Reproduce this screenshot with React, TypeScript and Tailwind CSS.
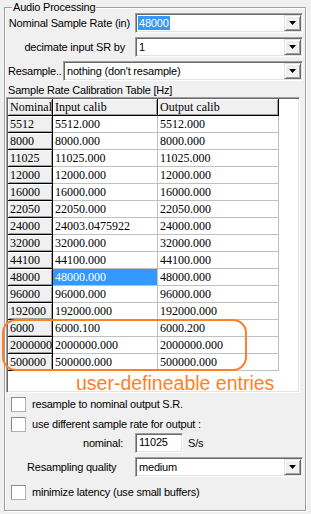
import React from 'react'

const rows: [string, string, string][] = [
  ['5512', '5512.000', '5512.000'],
  ['8000', '8000.000', '8000.000'],
  ['11025', '11025.000', '11025.000'],
  ['12000', '12000.000', '12000.000'],
  ['16000', '16000.000', '16000.000'],
  ['22050', '22050.000', '22050.000'],
  ['24000', '24003.0475922', '24000.000'],
  ['32000', '32000.000', '32000.000'],
  ['44100', '44100.000', '44100.000'],
  ['48000', '48000.000', '48000.000'],
  ['96000', '96000.000', '96000.000'],
  ['192000', '192000.000', '192000.000'],
  ['6000', '6000.100', '6000.200'],
  ['2000000', '2000000.000', '2000000.000'],
  ['500000', '500000.000', '500000.000'],
]

const ui = 'text-[11px] tracking-[-0.2px] whitespace-nowrap'

function Combo({ value, width, selected }: { value: string; width: string; selected?: boolean }) {
  return (
    <div
      className={`${width} h-[20px] flex items-center bg-white border border-t-[#a0a0a0] border-l-[#a0a0a0] border-b-white border-r-white shadow-[inset_1px_1px_0_#696969,inset_-1px_-1px_0_#e3e3e3]`}
    >
      <div className={`flex-1 pl-[2px] leading-none ${ui}`}>
        <span className={selected ? 'bg-[#3399ff] text-white px-[1px] py-[1px]' : 'px-[1px]'}>{value}</span>
      </div>
      <div className="w-[17px] h-[16px] mr-[1px] bg-[#f0f0f0] flex items-center justify-center border border-t-[#e3e3e3] border-l-[#e3e3e3] border-b-[#696969] border-r-[#696969] shadow-[inset_1px_1px_0_white,inset_-1px_-1px_0_#a0a0a0]">
        <svg width="7" height="4" viewBox="0 0 7 4">
          <path d="M0 0h7L3.5 4z" fill="#000" />
        </svg>
      </div>
    </div>
  )
}

function Check({ label }: { label: string }) {
  return (
    <div className="flex items-center h-[15px]">
      <div className="w-[15px] h-[15px] ml-[5px] bg-white border border-[#b0b0b0] border-t-[#8a8a8a] border-l-[#8a8a8a]" />
      <span className={`ml-[6px] ${ui}`}>{label}</span>
    </div>
  )
}

export default function App() {
  return (
    <div className="w-[311px] h-[514px] bg-[#f0f0f0] text-black pl-[4px] pt-[7px]" style={{ fontFamily: '"Liberation Sans", Arial, sans-serif' }}>
      <div className="relative w-[302px] h-[504px] border border-[#a0a0a0] shadow-[1px_1px_0_white,inset_1px_1px_0_white]">
        <span className={`absolute -top-[8px] left-[7px] px-[1px] bg-[#f0f0f0] leading-[14px] ${ui}`}>Audio Processing</span>

        <div className="flex flex-col pl-[1px] pt-[5px]">
          <div className="flex items-center">
            <div className={`w-[129px] text-right pr-[5px] ${ui}`}>Nominal Sample Rate (in)</div>
            <Combo value="48000" width="w-[168px]" selected />
          </div>
          <div className="flex items-center mt-[4px]">
            <div className={`w-[129px] text-right pr-[10px] ${ui}`}>decimate input SR by</div>
            <Combo value="1" width="w-[168px]" />
          </div>
          <div className="flex items-center mt-[4px]">
            <div className={`w-[57px] pl-[2px] ${ui}`}>Resample..</div>
            <Combo value="nothing (don't resample)" width="w-[240px]" />
          </div>
          <div className={`pl-[2px] mt-[3px] leading-[13px] ${ui}`}>Sample Rate Calibration Table [Hz]</div>

          <div className="relative w-[294px] h-[296px] bg-white border border-t-[#a0a0a0] border-l-[#a0a0a0] border-b-white border-r-white shadow-[inset_1px_1px_0_#696969,inset_-1px_-1px_0_#e3e3e3] p-[1px] overflow-hidden">
            <div className="text-[12px]" style={{ fontFamily: '"Liberation Serif", "Times New Roman", serif' }}>
              <div className="flex h-[17px]">
                {[['Nominal', 'w-[45px]'], ['Input calib', 'w-[105px]'], ['Output calib', 'w-[121px]']].map(([t, w]) => (
                  <div key={t} className={`${w} h-[17px] bg-[#f0f0f0] border-r border-b border-black shadow-[inset_1px_1px_0_white,inset_-1px_-1px_0_#a0a0a0] pl-[2px] leading-[16px] overflow-hidden whitespace-nowrap`}>
                    {t}
                  </div>
                ))}
              </div>
              {rows.map(([n, a, b]) => {
                const sel = n === '48000'
                return (
                  <div key={n} className="flex h-[17px]">
                    <div className="w-[45px] h-[17px] bg-[#f0f0f0] border-r border-b border-black shadow-[inset_1px_1px_0_white,inset_-1px_-1px_0_#a0a0a0] pl-[2px] leading-[16px] whitespace-nowrap overflow-hidden">
                      {n}
                    </div>
                    <div className={`w-[105px] h-[17px] border-r border-b border-[#c0c0c0] pl-[2px] leading-[16px] ${sel ? 'bg-[#3399ff] text-white' : ''}`}>{a}</div>
                    <div className="w-[121px] h-[17px] border-r border-b border-[#c0c0c0] pl-[2px] leading-[16px]">{b}</div>
                  </div>
                )
              })}
            </div>
            <div className="pl-[68px] pt-[2px] text-[19.5px] leading-[20px] text-[#ff7f27] whitespace-nowrap">user-defineable entries</div>
          </div>

          <div className="mt-[4px] flex flex-col">
            <Check label="resample to nominal output S.R." />
            <div className="mt-[5px]">
              <Check label="use different sample rate for output :" />
            </div>
            <div className="flex items-center mt-[1px]">
              <div className={`w-[129px] text-right pr-[12px] ${ui}`}>nominal:</div>
              <div className={`w-[48px] h-[20px] bg-white border border-t-[#a0a0a0] border-l-[#a0a0a0] border-b-white border-r-white shadow-[inset_1px_1px_0_#696969,inset_-1px_-1px_0_#e3e3e3] pl-[3px] leading-[17px] ${ui}`}>11025</div>
              <span className={`ml-[5px] ${ui}`}>S/s</span>
            </div>
            <div className="flex items-center mt-[4px]">
              <div className={`w-[129px] pl-[21px] ${ui}`}>Resampling quality</div>
              <Combo value="medium" width="w-[168px]" />
            </div>
            <div className="mt-[8px]">
              <Check label="minimize latency (use small buffers)" />
            </div>
          </div>
        </div>

        <div className="absolute left-[-3px] top-[311px] w-[245px] h-[52px] border-2 border-[#ff7f27] rounded-[14px] pointer-events-none" />
      </div>
    </div>
  )
}
